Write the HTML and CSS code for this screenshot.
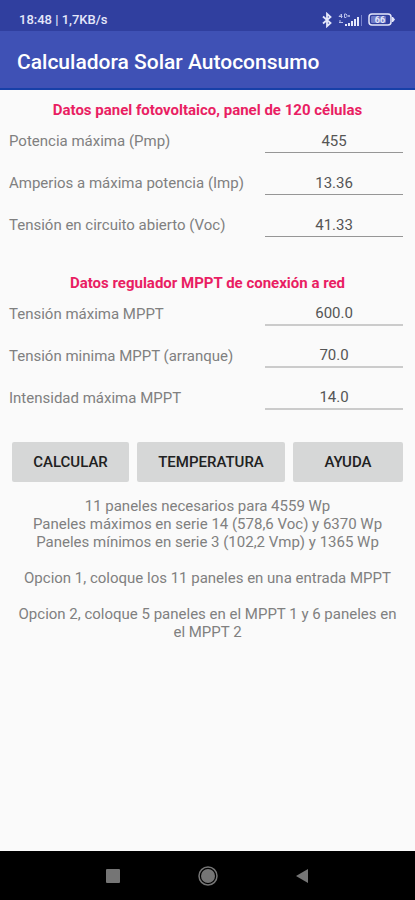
FILE: index.html
```html
<!DOCTYPE html>
<html lang="es">
<head>
<meta charset="utf-8">
<meta name="viewport" content="width=device-width, initial-scale=1">
<title>Calculadora Solar Autoconsumo</title>
<link rel="stylesheet" href="styles.css">
</head>
<body>
<div class="status">
  <span>18:48 | 1,7KB/s</span>
  <div class="status-icons">
    <svg width="12" height="16" viewBox="0 0 12 16" fill="none" stroke="#e4e7fa" stroke-width="1.8" aria-hidden="true"><path d="M2 4.500L9.500 11L6 14.200V1.800L9.500 5L2 11.500"/></svg>
    <svg width="25" height="14" viewBox="0 0 25 14" aria-hidden="true">
      <g fill="none" stroke="#b9c0ea" stroke-width="1"><path d="M3.5 5V1L1 3.5H4.500M6.500 1V4.500H8L9 3.500V2L8 1ZM10 3H12M11 2V4M1 9.500H5M1 8H3"/></g>
      <path fill="#e4e7fa" d="M7 11h2v2H7zM10 10h2v3h-2zM13 8h2v5h-2zM16 6h2v7h-2zM19 4h2v9h-2z"/>
      <path fill="#7883cc" d="M23 2h1v11h-1z"/>
    </svg>
    <svg width="27" height="14" viewBox="0 0 27 14" aria-hidden="true">
      <rect x="1" y="1" width="22" height="11" rx="3" fill="none" stroke="#e4e7fa" stroke-width="1.500"/>
      <path fill="#e4e7fa" d="M24 4h1l2 2.500L25 9h-1z"/>
      <rect x="3" y="3" width="15" height="7" rx="1" fill="#6f7bc6"/>
      <text class="battery" x="12" y="10" text-anchor="middle">66</text>
    </svg>
  </div>
</div>
<header class="appbar"><h1>Calculadora Solar Autoconsumo</h1></header>
<main>
  <form>
    <section>
      <h2>Datos panel fotovoltaico, panel de 120 células</h2>
      <div class="row"><label for="pmp">Potencia máxima (Pmp)</label><input id="pmp" inputmode="decimal" value="455"></div>
      <div class="row"><label for="imp">Amperios a máxima potencia (Imp)</label><input id="imp" inputmode="decimal" value="13.36"></div>
      <div class="row"><label for="voc">Tensión en circuito abierto (Voc)</label><input id="voc" inputmode="decimal" value="41.33"></div>
    </section>
    <section class="mppt">
      <h2>Datos regulador MPPT de conexión a red</h2>
      <div class="row"><label for="vmax">Tensión máxima MPPT</label><input id="vmax" inputmode="decimal" value="600.0"></div>
      <div class="row"><label for="vmin">Tensión minima MPPT (arranque)</label><input id="vmin" inputmode="decimal" value="70.0"></div>
      <div class="row"><label for="imax">Intensidad máxima MPPT</label><input id="imax" inputmode="decimal" value="14.0"></div>
    </section>
    <div class="actions">
      <button type="button">CALCULAR</button>
      <button type="button">TEMPERATURA</button>
      <button type="button">AYUDA</button>
    </div>
  </form>
  <div class="results">
    <p>11 paneles necesarios para 4559 Wp<br>Paneles máximos en serie 14 (578,6 Voc) y 6370 Wp<br>Paneles mínimos en serie 3 (102,2 Vmp) y 1365 Wp</p>
    <p>Opcion 1, coloque los 11 paneles en una entrada MPPT</p>
    <p>Opcion 2, coloque 5 paneles en el MPPT 1 y 6 paneles en el MPPT 2</p>
  </div>
</main>
<nav class="navbar">
  <button type="button" aria-label="Recientes"><svg width="20" height="20" viewBox="0 0 20 20"><rect x="3" y="3" width="14" height="14" rx="1" fill="#757575"/></svg></button>
  <button type="button" aria-label="Inicio"><svg width="20" height="20" viewBox="0 0 20 20"><circle cx="10" cy="10" r="9" fill="none" stroke="#757575" stroke-width="1.500"/><circle cx="10" cy="10" r="7" fill="#757575"/></svg></button>
  <button type="button" aria-label="Atrás"><svg width="20" height="20" viewBox="0 0 20 20"><path d="M4 10L16 3V17Z" fill="#757575"/></svg></button>
</nav>
</body>
</html>
```
FILE: styles.css
```css
* {
  box-sizing: border-box;
}

body {
  margin: 0;
  min-height: 100vh;
  display: flex;
  flex-direction: column;
  background: #fafafa;
  color: #808080;
  font: 15px/18px Roboto, sans-serif;
}

h1,
h2,
p {
  margin: 0;
}

.status {
  display: flex;
  justify-content: space-between;
  align-items: center;
  height: 31px;
  padding: 8px 20px 0 19px;
  background: #303f9f;
  color: #e4e7fa;
  font-size: 13px;
  font-weight: 500;
}

.status-icons {
  display: flex;
  align-items: center;
  gap: 5px;
}

.battery {
  font: 700 9px Roboto, sans-serif;
  fill: #e4e7fa;
}

.appbar {
  display: flex;
  align-items: center;
  height: 59px;
  padding: 4px 17px 0;
  background: #3f51b5;
  border-bottom: 2px solid #1740a8;
  color: #fff;
}

h1 {
  font-size: 21px;
  line-height: 28px;
  font-weight: 500;
}

main {
  flex: 1;
  padding: 11px 8px 24px;
}

h2 {
  margin-bottom: 1px;
  text-align: center;
  font-size: 15px;
  line-height: 18px;
  font-weight: 700;
  color: #e91e63;
}

.row {
  display: flex;
  align-items: center;
  justify-content: space-between;
  height: 42px;
  padding: 0 4px 0 1px;
}

.row input {
  width: 35%;
  height: 24px;
  padding: 0;
  border: 0;
  border-bottom: 1px solid #969696;
  background: transparent;
  color: #555;
  font: inherit;
  text-align: center;
}

.mppt {
  margin-top: 28px;
}

.mppt input {
  border-bottom: 2px solid #cbcbcb;
}

.actions {
  display: grid;
  grid-template-columns: 117fr 148fr 110fr;
  gap: 8px;
  margin-top: 23px;
  padding: 0 4px;
}

.actions button {
  height: 40px;
  padding: 0;
  border: 0;
  border-radius: 2px;
  background: #d6d7d7;
  color: #212121;
  font: 500 15px/18px Roboto, sans-serif;
}

.results {
  display: grid;
  gap: 18px;
  margin-top: 15px;
  padding: 0 8px;
  text-align: center;
}

.navbar {
  display: flex;
  justify-content: center;
  align-items: center;
  gap: 18%;
  height: 49px;
  background: #000;
}

.navbar button {
  display: flex;
  padding: 0;
  border: 0;
  background: none;
}
```
